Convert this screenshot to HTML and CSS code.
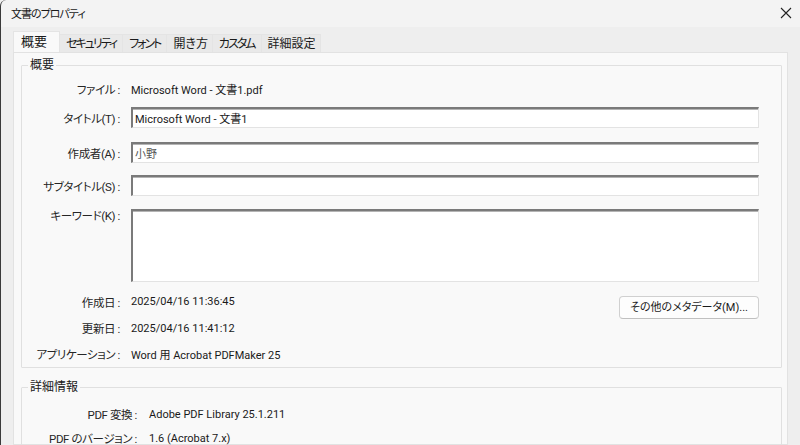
FILE: index.html
```html
<!DOCTYPE html>
<html lang="ja">

<head>
    <meta charset="UTF-8">
    <meta name="viewport" content="width=device-width, initial-scale=1.0">
    <title>文書のプロパティ</title>
    <link rel="stylesheet" href="styles.css">
</head>

<body>
    <div class="window">
        <div class="titlebar">
            <span class="title">文書のプロパティ</span>
            <span class="close">
                <svg width="12" height="12" viewBox="0 0 12 12">
                    <path d="M1 1 L11 11 M11 1 L1 11" stroke="#222" stroke-width="1.1" fill="none"/>
                </svg>
            </span>
        </div>

        <div class="tabs">
            <div class="tab active">概要</div>
            <div class="tab kana">セキュリティ</div>
            <div class="tab kana">フォント</div>
            <div class="tab">開き方</div>
            <div class="tab kana">カスタム</div>
            <div class="tab">詳細設定</div>
        </div>

        <div class="panel">
            <fieldset class="group">
                <legend>概要</legend>
                <div class="grid summary">
                    <div class="label">ファイル :</div>
                    <div class="value">Microsoft Word - 文書1.pdf</div>

                    <div class="label">タイトル(T) :</div>
                    <div class="value"><input class="field" type="text" value="Microsoft Word - 文書1"></div>

                    <div class="label">作成者(A) :</div>
                    <div class="value"><input class="field author" type="text" value="小野"></div>

                    <div class="label">サブタイトル(S) :</div>
                    <div class="value"><input class="field" type="text" value=""></div>

                    <div class="label top">キーワード(K) :</div>
                    <div class="value"><textarea class="field keywords"></textarea></div>

                    <div class="label">作成日 :</div>
                    <div class="value split">
                        <span>2025/04/16 11:36:45</span>
                        <button class="more">その他のメタデータ(M)...</button>
                    </div>

                    <div class="label">更新日 :</div>
                    <div class="value">2025/04/16 11:41:12</div>

                    <div class="label">アプリケーション :</div>
                    <div class="value">Word 用 Acrobat PDFMaker 25</div>
                </div>
            </fieldset>

            <fieldset class="group details">
                <legend>詳細情報</legend>
                <div class="grid info">
                    <div class="label">PDF 変換 :</div>
                    <div class="value">Adobe PDF Library 25.1.211</div>

                    <div class="label">PDF のバージョン :</div>
                    <div class="value">1.6 (Acrobat 7.x)</div>
                </div>
            </fieldset>
        </div>
    </div>
</body>
</html>
```

FILE: styles.css
```css
/* dialog look, windows style */
body {
    margin: 0;
    padding: 0;
    font-family: Roboto, "Noto Sans CJK JP", sans-serif;
    font-size: 11px;
    font-feature-settings: "palt";
    color: #1a1a1a;
    background-color: #f0f0f0;
    overflow: hidden;
}

.window {
    height: 445px;
    border-left: 1px solid #3a3a3a;
    border-top-left-radius: 6px;
    background: linear-gradient(#f3f3f3 0, #f3f3f3 27px, #eeeeee 27px);
    display: flex;
    flex-direction: column;
    overflow: hidden;
}

.titlebar {
    flex-shrink: 0;
    height: 26px;
    display: flex;
    align-items: center;
    justify-content: space-between;
    padding: 0 7px 0 10px;
}

.title {
    font-size: 11px;
    letter-spacing: -1px;
}

.close {
    display: flex;
    width: 14px;
    height: 14px;
    align-items: center;
    justify-content: center;
}

.tabs {
    flex-shrink: 0;
    display: flex;
    align-items: flex-end;
    padding: 5px 0 0 12px;
    height: 21px;
}

.tab {
    height: 18px;
    line-height: 18px;
    padding: 0 4px 0 6px;
    font-size: 12px;
    background-color: #e9e9e9;
    border-top: 1px solid #e4e4e4;
    border-right: 1px solid #e4e4e4;
    box-sizing: border-box;
}

.tab.kana {
    letter-spacing: -2px;
    padding-right: 6px;
}

.tab.active {
    height: 21px;
    line-height: 19px;
    padding: 0 12px 0 7px;
    background-color: #f9f9f9;
    border: 1px solid #e4e4e4;
    border-bottom: none;
    font-size: 13px;
}

.panel {
    flex: 1;
    min-height: 0;
    margin: 0 12px 0 12px;
    padding: 4px 5px 0 7px;
    background-color: #f9f9f9;
    border: 1px solid #e2e2e2;
}

.group {
    margin: 0;
    padding: 0;
    border: 1px solid #e0e0e0;
    border-radius: 1px;
}

.group legend {
    margin-left: 6px;
    padding: 0 2px;
    font-size: 12px;
    line-height: 16px;
}

.grid {
    display: grid;
    column-gap: 11px;
    align-items: center;
}

.summary {
    grid-template-columns: 98px 628px;
    grid-template-rows: 22px 35px 35px 31px 88px 26px 26px 26px;
    padding-top: 5px;
}

.details {
    margin-top: 11px;
}

.info {
    grid-template-columns: 115px 1fr;
    column-gap: 12px;
    grid-template-rows: 24px 24px;
    padding-top: 7px;
    padding-bottom: 10px;
}

.label {
    text-align: right;
    white-space: nowrap;
    color: #262626;
    font-size: 11.5px;
    letter-spacing: -0.4px;
}

.label.top {
    align-self: start;
    padding-top: 6px;
}

.value {
    white-space: nowrap;
    font-size: 11px;
}

.field {
    display: block;
    width: 100%;
    height: 21px;
    box-sizing: border-box;
    margin: 0;
    padding: 0 2px;
    font-family: Roboto, "Noto Sans CJK JP", sans-serif;
    font-size: 11px;
    font-feature-settings: "palt";
    color: #1a1a1a;
    background-color: #ffffff;
    border: 1px solid #e3e3e3;
    border-top: 2px solid #7a7a7a;
    border-left: 2px solid #7a7a7a;
    box-shadow: inset 0 1px 0 #b4b4b4;
    outline: none;
}

.field.author {
    color: #555;
}

.keywords {
    height: 73px;
    resize: none;
}

.split {
    display: flex;
    justify-content: space-between;
    align-items: flex-start;
    align-self: stretch;
    line-height: 26px;
}

.more {
    margin-top: 7px;
    height: 23px;
    width: 140px;
    padding: 0;
    font-family: Roboto, "Noto Sans CJK JP", sans-serif;
    font-size: 11px;
    font-feature-settings: "palt";
    line-height: 21px;
    color: #1a1a1a;
    background-color: #fdfdfd;
    border: 1px solid #d0d0d0;
    border-bottom-color: #c0c0c0;
    border-radius: 4px;
    cursor: pointer;
}

.more:hover {
    background-color: #f5f5f5;
}
```
